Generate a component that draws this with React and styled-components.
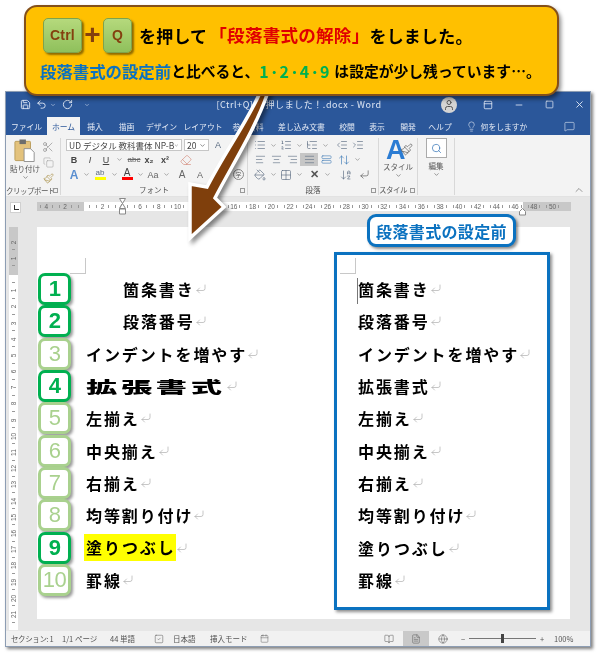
import React from "react";
import styled, { createGlobalStyle } from "styled-components";
import {
  Save, Undo2, RotateCw, ChevronDown, ChevronUp, Minus, Square, X, User, Lightbulb, MessageSquare,
  Scissors, Copy, Paintbrush, Eraser, List, ListOrdered, ListTree, IndentDecrease, IndentIncrease,
  AlignLeft, AlignCenter, AlignRight, AlignJustify, StretchHorizontal, ArrowUpDown, PaintBucket,
  Grid2x2, ArrowDownAZ, CornerDownLeft, Search, BookOpen, FileText, Globe, PanelTop, SquareCheck, Calendar,
} from "lucide-react";

const Global = createGlobalStyle`
  html, body { margin: 0; padding: 0; background: #fff; }
  * { box-sizing: border-box; }
  body { font-family: "Noto Sans CJK JP", "Noto Sans", sans-serif; }
`;

const Sheet = styled.div`
  position: relative;
  width: 600px;
  height: 655px;
  overflow: hidden;
  padding: 91px 0 0 5px;
  background: #fff;
  filter: blur(0.3px);
`;

const Callout = styled.div`
  position: absolute;
  z-index: 5;
  left: 24px;
  top: 5px;
  width: 535px;
  height: 91px;
  padding: 10px 0 0 17px;
  background: #ffc000;
  border: 2.5px solid #84501a;
  border-radius: 13px;
  box-shadow: 2px 3px 4px rgba(0, 0, 0, 0.45);
  display: flex;
  flex-direction: column;
  color: #000;
  font-weight: 700;
`;

const KeyRow = styled.div`
  display: flex;
  align-items: center;
  height: 35px;
  font-size: 17px;
  letter-spacing: 0.2px;
  line-height: 1;
  padding-top: 1px;
`;

const Key = styled.div`
  width: ${(p) => p.$w}px;
  height: 35px;
  border-radius: 5px;
  background: linear-gradient(#b5d97c, #8fc05c);
  border: 1px solid #7ea24c;
  box-shadow: 2px 2px 2px rgba(70, 50, 0, 0.6);
  color: #84400f;
  font: 700 14px "Liberation Sans", sans-serif;
  display: flex;
  align-items: center;
  justify-content: center;
`;

const Plus = styled.div`
  width: 21px;
  color: #84400f;
  font: 700 28px "Liberation Sans", sans-serif;
  text-align: center;
`;

const LeadText = styled.span`
  margin-left: 7px;
`;

const RedText = styled.span`
  color: #e00000;
  font-size: 17.6px;
  margin-left: 2px;
`;

const NoteRow = styled.div`
  display: flex;
  align-items: center;
  height: 24px;
  margin: 7px 0 0 -3px;
  font-size: 14.8px;
  line-height: 1;
  white-space: nowrap;
`;

const BlueText = styled.span`
  color: #0b72c0;
  font-size: 16.4px;
`;

const GreenText = styled.span`
  color: #00b050;
  font-size: 16px;
  width: 75px;
  letter-spacing: 1.4px;
`;

const ArrowArt = styled.svg`
  position: absolute;
  z-index: 4;
  left: 0;
  top: 0;
  overflow: visible;
  filter: drop-shadow(3px 3px 2px rgba(0, 0, 0, 0.45));
`;

const Window = styled.div`
  width: 586px;
  height: 556px;
  background: #e6e6e6;
  border: 1px solid #8d9db3;
  box-shadow: 2px 2px 3px rgba(0, 0, 0, 0.5);
  display: flex;
  flex-direction: column;
`;

const TitleBar = styled.div`
  height: 25px;
  background: #2b579a;
  color: #dfe7f4;
  display: flex;
  align-items: center;
  font-size: 9px;
  flex: none;
`;

const Slot = styled.div`
  width: ${(p) => p.$w}px;
  flex: none;
  display: flex;
  align-items: center;
  justify-content: center;
  white-space: nowrap;
`;

const DocName = styled(Slot)`
  letter-spacing: 0.55px;
`;

const Avatar = styled.div`
  width: 16px;
  height: 16px;
  border-radius: 50%;
  background: #d4d4d4;
  color: #555;
  display: flex;
  align-items: center;
  justify-content: center;
`;

const TabBar = styled.div`
  height: 18px;
  background: #2b579a;
  color: #e4eaf5;
  display: flex;
  align-items: stretch;
  font-size: 7.8px;
  flex: none;
`;

const Tab = styled.div`
  width: ${(p) => p.$w}px;
  flex: none;
  display: flex;
  align-items: center;
  justify-content: center;
  white-space: nowrap;
  background: ${(p) => (p.$active ? "#f3f3f3" : "transparent")};
  color: ${(p) => (p.$active ? "#2b579a" : "inherit")};
`;

const Ribbon = styled.div`
  position: relative;
  height: 62px;
  background: #f3f3f3;
  display: flex;
  flex: none;
  padding-top: 3px;
  color: #555;
  font-size: 8px;
  border-bottom: 1px solid #e2e2e2;
`;

const Group = styled.div`
  width: ${(p) => p.$w}px;
  flex: none;
  height: 57px;
  position: relative;
  border-right: 1px solid #d8d8d8;
  display: flex;
  flex-direction: column;
`;

const GroupBody = styled.div`
  flex: 1;
  display: flex;
  flex-direction: ${(p) => (p.$row ? "row" : "column")};
  padding-left: ${(p) => p.$pad || 0}px;
`;

const GroupLabel = styled.div`
  height: 11px;
  line-height: 11px;
  padding-right: ${(p) => p.$pr || 0}px;
  text-align: center;
  color: #555;
  font-size: 7.5px;
  letter-spacing: ${(p) => p.$tight || 0}px;
  white-space: nowrap;
`;

const Launcher = styled.div`
  position: absolute;
  right: 2px;
  bottom: 2px;
  width: 5px;
  height: 5px;
  border: 1px solid #999;
`;

const ToolRow = styled.div`
  display: flex;
  align-items: center;
  height: ${(p) => p.$h || 15}px;
`;

const Tool = styled.div`
  width: ${(p) => p.$w || 16}px;
  height: 13px;
  flex: none;
  display: flex;
  align-items: center;
  justify-content: center;
  color: ${(p) => p.$c || "#5a6b80"};
  font: ${(p) => (p.$bold ? 700 : 400)} ${(p) => p.$size || 9}px "Liberation Sans", sans-serif;
  font-style: ${(p) => (p.$italic ? "italic" : "normal")};
  text-decoration: ${(p) => p.$line || "none"};
  background: ${(p) => (p.$on ? "#c6c6c6" : "transparent")};
`;

const ColorTool = styled(Tool)`
  flex-direction: column;
  line-height: 8px;
  &::after {
    content: "";
    width: 11px;
    height: 3px;
    background: ${(p) => p.$bar};
  }
`;

const RoundTool = styled.div`
  width: 11px;
  height: 11px;
  margin-left: 26px;
  border: 1px solid #888;
  border-radius: 50%;
  color: #666;
  font-size: 6px;
  line-height: 9px;
  text-align: center;
  flex: none;
`;

const FontBox = styled.div`
  width: ${(p) => p.$w}px;
  height: 12px;
  background: #fff;
  border: 1px solid #c6c6c6;
  color: #444;
  font-size: 8.5px;
  line-height: 10px;
  display: flex;
  align-items: center;
  justify-content: space-between;
  padding: 0 2px;
  margin-right: 2px;
  white-space: nowrap;
  flex: none;
`;

const PasteCol = styled.div`
  width: 36px;
  padding-left: 2px;
  display: flex;
  flex-direction: column;
  align-items: center;
  line-height: 11px;
  font-size: 7.5px;
  white-space: nowrap;
`;

const SmallCol = styled.div`
  display: flex;
  flex-direction: column;
  gap: 3px;
  margin-left: -2px;
  padding-top: 2px;
`;

const BigCol = styled.div`
  flex: 1;
  display: flex;
  flex-direction: column;
  align-items: center;
  line-height: 10px;
  font-size: 7.5px;
`;

const BigA = styled.div`
  position: relative;
  height: 24px;
  width: 30px;
  color: #2b7cd3;
  font: 700 27px/24px "Liberation Sans", sans-serif;
  padding-left: 3px;
`;

const BrushSpot = styled.span`
  position: absolute;
  right: 0;
  top: 5px;
  color: #666;
  display: flex;
`;

const EditBox = styled.div`
  width: 21px;
  height: 20px;
  margin-bottom: 3px;
  background: #fff;
  border: 1px solid #ababab;
  display: flex;
  align-items: center;
  justify-content: center;
  color: #2b6fb5;
`;

const CollapseBtn = styled.div`
  position: absolute;
  right: 5px;
  bottom: 0;
  color: #666;
  display: flex;
`;

const RulerBar = styled.div`
  position: relative;
  height: 30px;
  flex: none;
  display: flex;
  align-items: flex-start;
  padding: 5px 0 0 4px;
`;

const TabStop = styled.div`
  width: 11px;
  height: 11px;
  background: #fff;
  border: 1px solid #d0d0d0;
  margin-right: 16px;
  display: flex;
  align-items: flex-end;
  padding: 0 0 2px 3px;
  &::after {
    content: "";
    width: 4px;
    height: 4px;
    border-left: 1px solid #333;
    border-bottom: 1px solid #333;
  }
`;

const HTrack = styled.div`
  position: relative;
  width: 534px;
  height: 9px;
  display: flex;
  background: linear-gradient(90deg, #c8c8c8 47px, #fff 47px, #fff 486px, #c8c8c8 486px);
  overflow: hidden;
`;

const HCell = styled.div`
  width: 18.75px;
  flex: none;
  position: relative;
  text-align: center;
  font: 6.5px/9px "Liberation Sans", sans-serif;
  color: #666;
  &::before, &::after {
    content: "";
    position: absolute;
    top: 3px;
    height: 3px;
    border-left: 1px solid #999;
  }
  &::before { left: 3px; }
  &::after { right: 3px; }
`;

const IndentMark = styled.svg`
  position: absolute;
  left: ${(p) => p.$x}px;
  top: ${(p) => p.$y}px;
`;

const DocArea = styled.div`
  flex: 1;
  min-height: 0;
  display: flex;
`;

const VRuler = styled.div`
  width: 31px;
  flex: none;
  padding-left: 3px;
`;

const VTrack = styled.div`
  width: 9px;
  height: 403px;
  padding-top: 7px;
  background: linear-gradient(#c8c8c8 48px, #fff 48px);
  overflow: hidden;
`;

const VCell = styled.div`
  height: 16.2px;
  position: relative;
  display: flex;
  align-items: center;
  justify-content: center;
  font: 6.5px "Liberation Sans", sans-serif;
  color: #666;
  & > span { transform: rotate(-90deg); }
  &::after {
    content: "";
    position: absolute;
    left: 3px;
    bottom: 0;
    width: 3px;
    border-top: 1px solid #999;
  }
`;

const PageSheet = styled.div`
  position: relative;
  width: 533px;
  height: 392px;
  background: #fff;
  display: flex;
  padding-left: 1px;
`;

const BeforeLabel = styled.div`
  position: absolute;
  left: 330px;
  top: -13px;
  width: 149px;
  height: 33px;
  background: #fff;
  border: 3px solid #0b72c0;
  border-radius: 9px;
  box-shadow: 2px 2px 3px rgba(0, 0, 0, 0.45);
  color: #0b72c0;
  font-weight: 700;
  font-size: 16px;
  letter-spacing: 0.35px;
  display: flex;
  align-items: center;
  justify-content: center;
  white-space: nowrap;
`;

const CropMark = styled.div`
  position: absolute;
  left: ${(p) => p.$x}px;
  top: ${(p) => p.$y}px;
  width: 16px;
  height: 16px;
  border-right: 1px solid #c8c8c8;
  border-bottom: 1px solid #c8c8c8;
`;

const LeftCol = styled.div`
  width: 296px;
  flex: none;
  padding-top: 46px;
`;

const Row = styled.div`
  height: 32.3px;
  display: flex;
  align-items: center;
`;

const Badge = styled.div`
  width: 33px;
  height: 32px;
  flex: none;
  margin-right: 15px;
  background: #fff;
  border: 3px solid ${(p) => (p.$on ? "#00b050" : "#a9d18e")};
  border-radius: 7px;
  box-shadow: 2px 2px 3px rgba(0, 0, 0, 0.4);
  color: ${(p) => (p.$on ? "#00b050" : "#a9d18e")};
  font: ${(p) => (p.$on ? 700 : 400)} 22px "Liberation Sans", sans-serif;
  display: flex;
  align-items: center;
  justify-content: center;
  letter-spacing: -0.5px;
`;

const Line = styled.div`
  display: flex;
  align-items: center;
  padding-left: ${(p) => (p.$indent ? 37 : 0)}px;
  font-size: 16px;
  font-weight: 700;
  letter-spacing: 1.9px;
  color: #000;
  white-space: nowrap;
`;

const Wide = styled.span`
  display: inline-block;
  font-weight: 900;
  transform: scaleX(1.95);
  transform-origin: left center;
  margin-right: 68px;
`;

const Marked = styled.span`
  display: inline-block;
  height: 27px;
  line-height: 27px;
  background: #ffff00;
  margin-left: -2px;
  padding-left: 2px;
`;

const ReturnMark = styled(CornerDownLeft)`
  color: #a8a8a8;
  flex: none;
`;

const BeforeBox = styled.div`
  position: relative;
  width: 216px;
  height: 358px;
  margin-top: 25px;
  padding: 18px 0 0 21px;
  background: #fff;
  border: 3px solid #0b72c0;
  box-shadow: 2px 2px 3px rgba(0, 0, 0, 0.45);
`;

const Caret = styled.div`
  position: absolute;
  left: 20px;
  top: 23px;
  height: 26px;
  border-left: 1px solid #777;
`;

const StatusBar = styled.div`
  position: relative;
  height: 15px;
  flex: none;
  background: #f1f1f1;
  color: #555;
  font-size: 7.5px;
  line-height: 12px;
  display: flex;
  align-items: center;
  margin-top: 4px;
`;

const StatusText = styled.div`
  width: ${(p) => p.$w}px;
  flex: none;
  padding-left: ${(p) => p.$pad || 0}px;
  letter-spacing: ${(p) => p.$tight || 0}px;
  white-space: nowrap;
  display: flex;
  align-items: center;
  justify-content: ${(p) => (p.$center ? "center" : "flex-start")};
  height: 100%;
  background: ${(p) => (p.$on ? "#c9c9c9" : "transparent")};
`;

const ZoomTrack = styled.div`
  position: relative;
  width: 67px;
  height: 1px;
  background: #777;
  flex: none;
  &::after {
    content: "";
    position: absolute;
    left: 32px;
    top: -4px;
    width: 3px;
    height: 9px;
    background: #444;
  }
`;

const Small = ({ as: Icon, size = 11, w, c }) => (
  <Tool $w={w} $c={c}><Icon size={size} strokeWidth={1.3} /></Tool>
);

const Drop = () => (
  <Tool $w={10} $c="#777"><ChevronDown size={7} strokeWidth={2} /></Tool>
);

const PasteIcon = () => (
  <svg width="22" height="25" viewBox="0 0 24 26">
    <rect x="1" y="3" width="17" height="21" rx="1" fill="#e3c27c" stroke="#b89a58" />
    <rect x="6" y="1" width="7" height="5" fill="#6d6d6d" />
    <path d="M11 11h7l4 4v10H11z" fill="#fff" stroke="#8c8c8c" />
  </svg>
);

const rows = [
  { n: 1, on: true, text: "箇条書き", indent: true },
  { n: 2, on: true, text: "段落番号", indent: true },
  { n: 3, text: "インデントを増やす" },
  { n: 4, on: true, text: "拡張書式", wide: true },
  { n: 5, text: "左揃え" },
  { n: 6, text: "中央揃え" },
  { n: 7, text: "右揃え" },
  { n: 8, text: "均等割り付け" },
  { n: 9, on: true, text: "塗りつぶし", marked: true },
  { n: 10, text: "罫線" },
];

const rulerNums = Array.from({ length: 28 }, (_, i) => Math.abs(i * 2 - 4));
const vNums = Array.from({ length: 24 }, (_, i) => Math.abs(i - 2));

export default function App() {
  return (
    <Sheet>
      <Global />
      <Callout>
        <KeyRow>
          <Key $w={39}>Ctrl</Key>
          <Plus>+</Plus>
          <Key $w={29}>Q</Key>
          <LeadText>を押して</LeadText>
          <RedText>「段落書式の解除」</RedText>
          <span>をしました。</span>
        </KeyRow>
        <NoteRow>
          <BlueText>段落書式の設定前</BlueText>
          <span>と比べると、</span>
          <GreenText>1･2･4･9</GreenText>
          <span>は設定が少し残っています…。</span>
        </NoteRow>
      </Callout>

      <ArrowArt width="600" height="260" viewBox="0 0 600 260">
        <path
          d="M262 88 C250 118 226 150 207 187 L190 184 L190 238 L224 207 L215 198 C232 165 255 130 268 92 Z"
          fill="#7f3f0c"
          stroke="#fff"
          strokeWidth="3.5"
          strokeLinejoin="miter"
        />
      </ArrowArt>

      <Window>
        <TitleBar>
          <Slot $w={11} />
          <Slot $w={16}><Save size={11} /></Slot>
          <Slot $w={16}><Undo2 size={11} /></Slot>
          <Slot $w={8}><ChevronDown size={6} /></Slot>
          <Slot $w={21}><RotateCw size={11} /></Slot>
          <Slot $w={17}><ChevronDown size={6} /></Slot>
          <Slot $w={133} />
          <DocName $w={142}>[Ctrl+Q] を押しました！.docx  -  Word</DocName>
          <Slot $w={71} />
          <Slot $w={16}><Avatar><User size={12} /></Avatar></Slot>
          <Slot $w={15} />
          <Slot $w={31}><PanelTop size={10} /></Slot>
          <Slot $w={31}><Minus size={10} /></Slot>
          <Slot $w={31}><Square size={9} /></Slot>
          <Slot $w={29}><X size={11} /></Slot>
        </TitleBar>
        <TabBar>
          <Tab $w={41}>ファイル</Tab>
          <Tab $w={33} $active>ホーム</Tab>
          <Tab $w={30}>挿入</Tab>
          <Tab $w={33}>描画</Tab>
          <Tab $w={37}>デザイン</Tab>
          <Tab $w={46}>レイアウト</Tab>
          <Tab $w={44}>参考資料</Tab>
          <Tab $w={63}>差し込み文書</Tab>
          <Tab $w={28}>校閲</Tab>
          <Tab $w={32}>表示</Tab>
          <Tab $w={30}>開発</Tab>
          <Tab $w={34}>ヘルプ</Tab>
          <Tab $w={28}><Lightbulb size={11} strokeWidth={1.3} /></Tab>
          <Tab $w={38}>何をしますか</Tab>
          <Tab $w={31} />
          <Tab $w={30}><MessageSquare size={11} strokeWidth={1.3} /></Tab>
        </TabBar>

        <Ribbon>
          <Group $w={55}>
            <GroupBody $row>
              <PasteCol>
                <PasteIcon />
                <span>貼り付け</span>
                <ChevronDown size={7} />
              </PasteCol>
              <SmallCol>
                <Small as={Scissors} size={12} c="#8a8a8a" />
                <Small as={Copy} size={11} c="#a5a5a5" />
                <Small as={Paintbrush} size={11} c="#a58a3c" />
              </SmallCol>
            </GroupBody>
            <GroupLabel $pr={10} $tight={-0.5}>クリップボード</GroupLabel>
            <Launcher />
          </Group>

          <Group $w={187}>
            <GroupBody $pad={5}>
              <ToolRow $h={14}>
                <FontBox $w={116}>UD デジタル 教科書体 NP-B<ChevronDown size={7} /></FontBox>
                <FontBox $w={25}>20<ChevronDown size={7} /></FontBox>
                <Tool $w={14}>A</Tool>
              </ToolRow>
              <ToolRow>
                <Tool $bold $c="#444">B</Tool>
                <Tool $italic $c="#444">I</Tool>
                <Tool $c="#444" $line="underline">U</Tool>
                <Drop />
                <Tool $w={20} $c="#666" $size={8} $line="line-through">abc</Tool>
                <Tool $w={10} $bold $c="#444">x₂</Tool>
                <Tool $w={22} $bold $c="#444">x²</Tool>
                <Small as={Eraser} size={12} w={20} c="#d48a7a" />
              </ToolRow>
              <ToolRow>
                <Tool $w={1} />
                <Tool $w={14} $bold $size={12} $c="#5b8fd0">A</Tool>
                <Drop />
                <ColorTool $w={18} $bar="#ffff00" $size={8}>ab</ColorTool>
                <Drop />
                <ColorTool $bar="#ff0000" $c="#444" $size={10}>A</ColorTool>
                <Drop />
                <Tool $c="#666">Aa</Tool>
                <Drop />
                <Tool $w={22} $c="#666" $size={10}>A</Tool>
                <Tool $w={14} $c="#666">A</Tool>
                <RoundTool>字</RoundTool>
              </ToolRow>
            </GroupBody>
            <GroupLabel>フォント</GroupLabel>
            <Launcher />
          </Group>

          <Group $w={131}>
            <GroupBody $pad={4}>
              <ToolRow $h={14}>
                <Small as={List} size={12} />
                <Drop />
                <Small as={ListOrdered} size={12} />
                <Drop />
                <Small as={ListTree} size={12} />
                <Drop />
                <Tool $w={4} />
                <Small as={IndentDecrease} size={12} />
                <Small as={IndentIncrease} size={12} />
              </ToolRow>
              <ToolRow>
                <Small as={AlignLeft} size={11} />
                <Small as={AlignCenter} size={11} />
                <Small as={AlignRight} size={11} />
                <Tool $w={18} $on><AlignJustify size={11} strokeWidth={1.3} /></Tool>
                <Small as={StretchHorizontal} size={11} c="#3b78b5" />
                <Tool $w={2} />
                <Small as={ArrowUpDown} size={12} c="#3b78b5" />
                <Drop />
              </ToolRow>
              <ToolRow>
                <Small as={PaintBucket} size={12} />
                <Drop />
                <Small as={Grid2x2} size={12} />
                <Drop />
                <Tool $w={2} />
                <Tool $bold $c="#555" $size={11}>✕</Tool>
                <Drop />
                <Tool $w={6} />
                <Small as={ArrowDownAZ} size={12} />
                <Small as={CornerDownLeft} size={11} w={20} c="#444" />
              </ToolRow>
            </GroupBody>
            <GroupLabel>段落</GroupLabel>
            <Launcher />
          </Group>

          <Group $w={39}>
            <GroupBody>
              <BigCol>
                <BigA>A<BrushSpot><Paintbrush size={13} strokeWidth={1.4} /></BrushSpot></BigA>
                <span>スタイル</span>
                <ChevronDown size={7} />
              </BigCol>
            </GroupBody>
            <GroupLabel $pr={10} $tight={-0.5}>スタイル</GroupLabel>
            <Launcher />
          </Group>

          <Group $w={37}>
            <GroupBody>
              <BigCol>
                <EditBox><Search size={11} strokeWidth={1.5} /></EditBox>
                <span>編集</span>
                <ChevronDown size={7} />
              </BigCol>
            </GroupBody>
          </Group>
          <CollapseBtn><ChevronUp size={12} strokeWidth={1.3} /></CollapseBtn>
        </Ribbon>

        <RulerBar>
          <TabStop />
          <HTrack>
            {rulerNums.map((n, i) => <HCell key={i}>{n || ""}</HCell>)}
          </HTrack>
          <IndentMark $x={113} $y={1} width="7" height="18" viewBox="0 0 7 18">
            <path d="M0.5 0.5h6L3.5 5.5zM3.5 5.5l3 5h-6zM0.5 11h6v5h-6z" fill="#fff" stroke="#888" />
          </IndentMark>
          <IndentMark $x={513} $y={11} width="7" height="8" viewBox="0 0 7 8">
            <path d="M3.5 0.5l3 3v3.5h-6V3.5z" fill="#fff" stroke="#888" />
          </IndentMark>
        </RulerBar>

        <DocArea>
          <VRuler>
            <VTrack>
              {vNums.map((n, i) => <VCell key={i}><span>{n || ""}</span></VCell>)}
            </VTrack>
          </VRuler>
          <PageSheet>
            <CropMark $x={33} $y={31} />
            <BeforeLabel>段落書式の設定前</BeforeLabel>
            <LeftCol>
              {rows.map((r) => (
                <Row key={r.n}>
                  <Badge $on={r.on}>{r.n}</Badge>
                  <Line $indent={r.indent}>
                    {r.wide ? <Wide>{r.text}</Wide> : r.marked ? <Marked>{r.text}</Marked> : r.text}
                    <ReturnMark size={12} strokeWidth={1.3} />
                  </Line>
                </Row>
              ))}
            </LeftCol>
            <BeforeBox>
              <CropMark $x={3} $y={3} />
              <Caret />
              {rows.map((r) => (
                <Row key={r.n}>
                  <Line>{r.text}<ReturnMark size={12} strokeWidth={1.3} /></Line>
                </Row>
              ))}
            </BeforeBox>
          </PageSheet>
        </DocArea>

        <StatusBar>
          <StatusText $w={56} $pad={5} $tight={-0.4}>セクション: 1</StatusText>
          <StatusText $w={48}>1/1 ページ</StatusText>
          <StatusText $w={44}>44 単語</StatusText>
          <StatusText $w={19}><SquareCheck size={10} strokeWidth={1.2} /></StatusText>
          <StatusText $w={37}>日本語</StatusText>
          <StatusText $w={50}>挿入モード</StatusText>
          <StatusText $w={121}><Calendar size={9} strokeWidth={1.2} /></StatusText>
          <StatusText $w={15} $center><BookOpen size={10} strokeWidth={1.2} /></StatusText>
          <StatusText $w={7} />
          <StatusText $w={26} $center $on><FileText size={10} strokeWidth={1.2} /></StatusText>
          <StatusText $w={28} $center><Globe size={10} strokeWidth={1.2} /></StatusText>
          <StatusText $w={12} $center>−</StatusText>
          <ZoomTrack />
          <StatusText $w={12} $center>+</StatusText>
          <StatusText $w={34} $pad={6}>100%</StatusText>
        </StatusBar>
      </Window>
    </Sheet>
  );
}
